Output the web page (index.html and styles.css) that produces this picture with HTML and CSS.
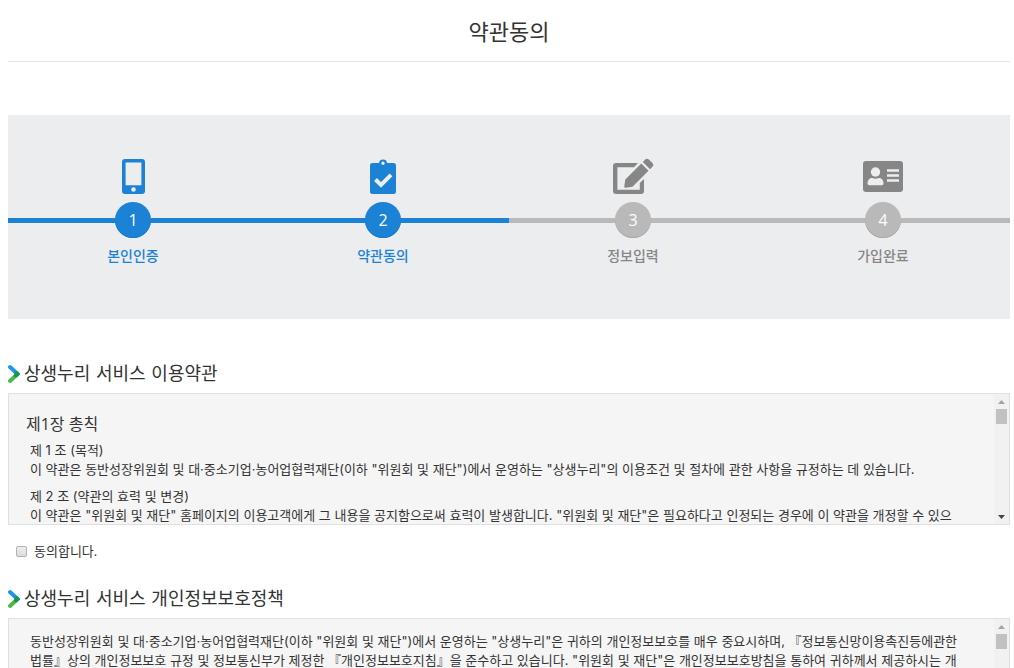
FILE: index.html
```html
<!DOCTYPE html>
<html lang="ko">
<head>
<meta charset="utf-8">
<title>약관동의</title>
<link rel="stylesheet" href="styles.css">
</head>
<body>
<main class="page">
  <h1 class="page-title">약관동의</h1>

  <ol class="steps">
    <li class="step step-done">
      <svg class="step-icon" viewBox="0 0 42 38" aria-hidden="true">
        <path fill="currentColor" fill-rule="evenodd" d="M13 1h17a3 3 0 0 1 3 3v29a3 3 0 0 1-3 3H13a3 3 0 0 1-3-3V4a3 3 0 0 1 3-3zm.6 3.400v22.800h15.800V4.400zM21.500 29.200a2.300 2.300 0 1 0 0 4.600 2.300 2.300 0 0 0 0-4.600z"/>
      </svg>
      <span class="step-number">1</span>
      <span class="step-label">본인인증</span>
    </li>
    <li class="step step-done">
      <svg class="step-icon" viewBox="0 0 42 38" aria-hidden="true">
        <path fill="currentColor" fill-rule="evenodd" d="M10.500 5H17a4.100 4.100 0 0 1 8.100 0h6.400a2.500 2.500 0 0 1 2.500 2.500v26a2.500 2.500 0 0 1-2.500 2.500h-21A2.500 2.500 0 0 1 8 33.500v-26A2.500 2.500 0 0 1 10.500 5zM21 3.500a1.700 1.700 0 1 0 0 3.400 1.700 1.700 0 0 0 0-3.400z"/>
        <path fill="none" stroke="#ecedee" stroke-width="4" d="M13.500 21.500l5.500 5.500 10-10.200"/>
      </svg>
      <span class="step-number">2</span>
      <span class="step-label">약관동의</span>
    </li>
    <li class="step">
      <svg class="step-icon" viewBox="0 0 42 38" aria-hidden="true">
        <path fill="currentColor" d="M4 5h22l-4 4.200H5.400v22.600h22.400V25l4.200-4v12a3 3 0 0 1-3 3H4a3 3 0 0 1-3-3V8a3 3 0 0 1 3-3z"/>
        <path fill="currentColor" d="M29.300 5.500l7.200 7.200-16 16-6.700 1a1.300 1.300 0 0 1-1.500-1.500l1-6.700zM30.800 4l2.400-2.400a2.600 2.600 0 0 1 3.700 0l3.500 3.500a2.600 2.600 0 0 1 0 3.700L38 11.200z"/>
      </svg>
      <span class="step-number">3</span>
      <span class="step-label">정보입력</span>
    </li>
    <li class="step">
      <svg class="step-icon" viewBox="0 0 42 38" aria-hidden="true">
        <rect x="1" y="3" width="40" height="31" rx="3" fill="currentColor"/>
        <g fill="#ecedee">
          <circle cx="13.500" cy="14" r="4.700"/>
          <path d="M5.500 25.500c0-3.500 2-5.500 4.800-5.500 2 1 4.400 1 6.400 0 2.800 0 4.800 2 4.800 5.500q0 1.800-1.800 1.800H7.300q-1.800 0-1.800-1.800z"/>
          <path d="M25 11.200h12v2.600H25zM25 16.200h12v2.600H25zM25 21.200h12v2.600H25z"/>
        </g>
      </svg>
      <span class="step-number">4</span>
      <span class="step-label">가입완료</span>
    </li>
  </ol>

  <section class="terms">
    <h2 class="terms-title">
      <svg class="chevron" viewBox="0 0 12 20" aria-hidden="true">
        <path d="M2 3l7.500 7" stroke="#1e96f0"/><path d="M2 17l7.500-7" stroke="#4bb847"/><path d="M8 11.400l1.500-1.400-1-1" stroke="#17945a"/>
      </svg>
      상생누리 서비스 이용약관
    </h2>
    <div class="terms-box">
      <div class="terms-text">
        <h3 class="chapter">제1장 총칙</h3>
        <p class="article">제 1 조 (목적)<br>이 약관은 동반성장위원회 및 대·중소기업·농어업협력재단(이하 "위원회 및 재단")에서 운영하는 "상생누리"의 이용조건 및 절차에 관한 사항을 규정하는 데 있습니다.</p>
        <p class="article">제 2 조 (약관의 효력 및 변경)<br>이 약관은 "위원회 및 재단" 홈페이지의 이용고객에게 그 내용을 공지함으로써 효력이 발생합니다. "위원회 및 재단"은 필요하다고 인정되는 경우에 이 약관을 개정할 수 있으</p>
      </div>
      <div class="scrollbar" aria-hidden="true">
        <svg class="arrow arrow-up" viewBox="0 0 7 4"><path d="M0 4l3.500-4L7 4z"/></svg>
        <div class="thumb"></div>
        <svg class="arrow arrow-down" viewBox="0 0 7 4"><path d="M0 0h7L3.500 4z"/></svg>
      </div>
    </div>
    <label class="agree"><input class="agree-check" type="checkbox">동의합니다.</label>
  </section>

  <section class="terms">
    <h2 class="terms-title">
      <svg class="chevron" viewBox="0 0 12 20" aria-hidden="true">
        <path d="M2 3l7.500 7" stroke="#1e96f0"/><path d="M2 17l7.500-7" stroke="#4bb847"/><path d="M8 11.400l1.500-1.400-1-1" stroke="#17945a"/>
      </svg>
      상생누리 서비스 개인정보보호정책
    </h2>
    <div class="terms-box">
      <div class="terms-text">
        <p class="article">동반성장위원회 및 대·중소기업·농어업협력재단(이하 "위원회 및 재단")에서 운영하는 "상생누리"은 귀하의 개인정보보호를 매우 중요시하며, 『정보통신망이용촉진등에관한<br>법률』상의 개인정보보호 규정 및 정보통신부가 제정한 『개인정보보호지침』을 준수하고 있습니다. "위원회 및 재단"은 개인정보보호방침을 통하여 귀하께서 제공하시는 개</p>
      </div>
      <div class="scrollbar" aria-hidden="true">
        <svg class="arrow arrow-up" viewBox="0 0 7 4"><path d="M0 4l3.500-4L7 4z"/></svg>
        <div class="thumb"></div>
        <svg class="arrow arrow-down" viewBox="0 0 7 4"><path d="M0 0h7L3.500 4z"/></svg>
      </div>
    </div>
  </section>
</main>
</body>
</html>
```
FILE: styles.css
```css
* {
  box-sizing: border-box;
}

body {
  margin: 0;
  height: 100vh;
  overflow: hidden;
  background: #fff;
  color: #333;
  font-family: "Open Sans", "Noto Sans CJK KR", sans-serif;
  font-size: 13px;
  line-height: 19px;
}

.page {
  height: 100%;
  padding: 0 4px 0 8px;
  overflow: hidden;
}

.page-title {
  margin: 0 0 53px;
  padding: 15px 0 14px;
  border-bottom: 1px solid #e7e7e7;
  font-size: 22px;
  font-weight: 400;
  line-height: 32px;
  text-align: center;
}

.steps {
  display: grid;
  grid-template-columns: repeat(4, 1fr);
  margin: 0 0 40px;
  padding: 43px 2px 53px 0;
  background:
    linear-gradient(to right, #1c82d6 50%, #b9b9b9 50%) 0 103px / 100% 5px no-repeat,
    #ecedee;
  list-style: none;
}

.step {
  display: flex;
  flex-direction: column;
  align-items: center;
  color: #868686;
  --marker: #b9b9b9;
  --edge: #a8a8a8;
}

.step-done {
  color: #1c82d6;
  --marker: #1c82d6;
  --edge: #1877c5;
}

.step-icon {
  width: 42px;
  height: 38px;
}

.step-number {
  width: 36px;
  height: 36px;
  margin: 6px 0 8px;
  border-radius: 50%;
  background: var(--marker);
  box-shadow: inset 0 -1px 0 var(--edge);
  color: #fff;
  font-size: 16px;
  font-weight: 500;
  line-height: 36px;
  text-align: center;
}

.step-label {
  font-size: 14px;
  font-weight: 500;
  line-height: 20px;
}

.terms {
  margin-bottom: 23px;
}

.terms-title {
  display: flex;
  align-items: center;
  gap: 4px;
  margin: 0 0 4px;
  font-family: "DejaVu Sans", "Noto Sans CJK KR", sans-serif;
  font-size: 18px;
  font-weight: 400;
  line-height: 30px;
}

.chevron {
  width: 12px;
  height: 20px;
  fill: none;
  stroke-width: 4;
  stroke-linecap: round;
}

.terms-box {
  display: flex;
  height: 132px;
  border: 1px solid #e0e0e0;
  background: #f5f5f5;
}

.terms-text {
  flex: 1;
  min-width: 0;
  padding: 13px 16px 0 17px;
  overflow: hidden;
}

.chapter {
  margin: 6px 0 6px;
  font-size: 16px;
  font-weight: 400;
  line-height: 22px;
}

.article {
  margin: 0 0 8px;
  padding-left: 4px;
  font-family: Inter, "Noto Sans CJK KR", sans-serif;
}

.scrollbar {
  display: flex;
  flex-direction: column;
  align-items: center;
  width: 15px;
  padding: 6px 0 5px;
  background: #f1f1f1;
}

.thumb {
  width: 11px;
  height: 15px;
  margin: 5px 0 auto;
  background: #c1c1c1;
}

.arrow {
  width: 7px;
  height: 4px;
}

.arrow-up {
  fill: #a3a3a3;
}

.arrow-down {
  fill: #444;
}

.agree {
  display: flex;
  align-items: center;
  gap: 7px;
  margin-top: 17px;
  padding-left: 8px;
}

.agree-check {
  appearance: none;
  width: 11px;
  height: 11px;
  margin: 0;
  border: 1px solid #b3b3b3;
  border-radius: 2px;
  background: linear-gradient(#eee, #dcdcdc);
}

.agree-check:checked {
  background: #1c82d6;
}
```
